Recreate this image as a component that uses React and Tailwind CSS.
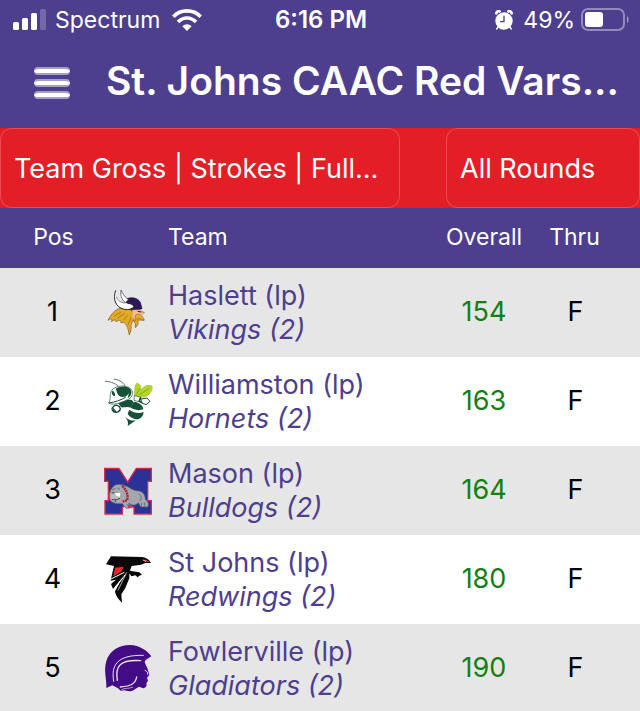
import React from "react";

function SignalIcon() {
  return (
    <svg className="h-[22px] w-[34px]" viewBox="0 0 34 22" fill="#fff" aria-hidden="true">
      <rect x="0" y="13" width="6" height="8" rx="1.5" />
      <rect x="9" y="9" width="6" height="12" rx="1.5" />
      <rect x="18" y="4" width="6" height="17" rx="1.5" />
      <rect x="27" y="0" width="6" height="21" rx="1.5" opacity="0.22" />
    </svg>
  );
}

function WifiIcon() {
  return (
    <svg className="h-[22px] w-[30px]" viewBox="0 0 90 66" aria-hidden="true">
      <g fill="none" stroke="#fff" strokeWidth="11">
        <path d="M4 23 C26 0 64 0 86 23" />
        <path d="M18 39 C34 23 56 23 72 39" />
      </g>
      <path d="M31 52 C39 44 51 44 59 52 L45 66 Z" fill="#fff" />
    </svg>
  );
}

function AlarmIcon() {
  return (
    <svg className="h-5 w-[18px]" viewBox="0 0 54 60" aria-hidden="true">
      <circle cx="27" cy="33" r="26" fill="#fff" />
      <g fill="none" stroke="#fff" strokeLinecap="round">
        <path d="M4 10 C5 5 9 3 14 4" strokeWidth="8" />
        <path d="M50 10 C49 5 45 3 40 4" strokeWidth="8" />
        <path d="M10 50 L5 57 M44 50 L49 57" strokeWidth="4" />
      </g>
      <path d="M27 17 V35 H15" fill="none" stroke="#4d3e8e" strokeWidth="4" />
    </svg>
  );
}

function BatteryIcon() {
  return (
    <svg className="h-6 w-12" viewBox="0 0 48 24" aria-hidden="true">
      <rect x="1" y="1" width="42" height="21" rx="6" fill="none" stroke="#fff" strokeOpacity="0.4" strokeWidth="2" />
      <rect x="4" y="4" width="18" height="15" rx="3" fill="#fff" />
      <path d="M46 8 C48 9 48 14 46 15 Z" fill="#fff" fillOpacity="0.5" />
    </svg>
  );
}

function VikingsLogo() {
  return (
    <>
      <path d="M86 82 C66 84 50 98 39 121 C48 115 54 116 49 125 C58 118 65 118 63 126 C72 118 78 120 78 129 C85 124 93 130 98 143 L103 165 C107 155 110 145 108 135 L114 119 L118 127 C124 131 119 137 121 143 C130 137 131 126 128 120 L147 121 L142 113 L138 107 L148 98 L128 88 Z" fill="#e2a926" stroke="#7d5a1a" strokeWidth="2" />
      <path d="M114 89 L137 88 L141 97 L148 101 L140 107 L127 106 L119 120 L112 110 Z" fill="#efb9a0" />
      <path d="M122 105 C132 99 142 105 148 120 C141 121 134 113 128 114 L119 124 Z" fill="#e9ae22" stroke="#7d5a1a" strokeWidth="1.5" />
      <path d="M57 109 L78 96 M67 114 L89 101 M85 121 L99 106 M99 134 L108 112" stroke="#8e661c" strokeWidth="2" />
      <path d="M86 62 C101 49 126 50 136 67 L141 86 C129 91 119 84 108 91 L100 72 Z" fill="#2c1958" stroke="#1b1230" strokeWidth="2" />
      <path d="M78 30 C76 47 80 59 91 68 L100 59 C87 49 83 40 78 30 Z" fill="#fff" stroke="#33303c" strokeWidth="2" />
      <path d="M62 31 C54 55 60 81 86 87 C100 90 112 86 116 80 C109 69 95 72 83 68 C68 63 63 52 62 31 Z" fill="#fff" />
      <path d="M62 31 C54 55 59 81 88 88 C101 90 111 88 117 80" fill="none" stroke="#222" strokeWidth="3" />
      <path d="M64 50 C69 63 77 68 91 69" fill="none" stroke="#55535c" strokeWidth="2" />
      <path d="M128 94 L139 96" stroke="#2b1a12" strokeWidth="3" />
    </>
  );
}

function HornetsLogo() {
  return (
    <>
      <path d="M118 82 C121 65 116 50 126 43 C137 45 138 54 137 64 C147 51 159 46 171 51 C174 62 165 80 146 84 Z" fill="#b7d527" stroke="#9dbe26" strokeWidth="2" />
      <path d="M124 76 L134 58 M132 78 L162 58" stroke="#5a9031" strokeWidth="2" />
      <g fill="none" stroke="#5c7568" strokeWidth="3">
        <path d="M30 37 C50 38 64 44 75 57" />
        <path d="M56 30 C76 33 87 42 92 56" />
      </g>
      <path d="M50 64 C64 47 95 48 108 60 C117 71 112 87 97 92 C77 104 52 109 40 102 C49 96 42 79 50 64 Z" fill="#fff" stroke="#174d38" strokeWidth="2" />
      <path d="M62 59 C78 49 100 51 107 62 C112 72 107 83 98 87 L102 72 C96 83 83 87 73 81 C66 76 66 67 62 59 Z" fill="#155039" />
      <path d="M52 65 C58 67 61 74 60 81 C53 81 48 74 52 65 Z" fill="#155039" />
      <path d="M42 102 C59 99 78 94 93 84" fill="none" stroke="#174d38" strokeWidth="3" />
      <path d="M70 103 C88 97 99 89 111 94 L122 106 L106 116 C98 111 82 118 78 114 Z" fill="#155039" />
      <path d="M55 113 C60 105 74 109 76 119 C75 130 60 134 54 126 C49 121 51 116 55 113 Z" fill="#fff" stroke="#174d38" strokeWidth="4" />
      <path d="M54 116 C50 124 57 131 66 130 L60 122 Z" fill="#174d38" />
      <path d="M118 80 L137 84 L131 98 L117 94 Z" fill="#fff" stroke="#174d38" strokeWidth="2" />
      <path d="M138 90 L156 87 L165 97 L153 107 L139 101 Z" fill="#fff" stroke="#174d38" strokeWidth="3" />
      <path d="M137 85 L133 97 L142 101" fill="none" stroke="#174d38" strokeWidth="5" />
      <path d="M117 99 C138 101 147 112 146 134 C137 146 124 153 98 170 C100 158 104 153 90 142 C100 136 102 126 106 116 Z" fill="#fff" />
      <path d="M118 98 C136 102 144 110 145 121 C131 126 116 123 106 115 Z M103 122 C116 132 132 134 146 129 C145 141 138 147 130 151 C114 151 102 142 98 134 Z M90 143 C100 152 113 157 123 154 L98 171 C101 160 98 153 90 143 Z" fill="#155039" />
    </>
  );
}

function BulldogsLogo() {
  return (
    <>
      <path d="M29 31 H72 L98 72 L124 31 H169 V70 H158 V128 H169 V168 H117 V148 L98 137 L82 148 V168 H30 V128 H40 V70 H29 Z" fill="#2b3196" stroke="#d82a49" strokeWidth="4" />
      <path d="M51 90 C57 79 71 76 84 81 C98 82 108 96 124 98 C141 98 151 108 151 124 C160 130 163 140 158 147 L137 147 L130 134 C120 145 109 142 101 135 L112 149 L93 151 L82 137 C68 139 56 136 46 129 C40 117 42 102 51 90 Z" fill="#a5a7ad" stroke="#55576a" strokeWidth="2" />
      <path d="M78 84 L86 79 L93 86 M52 95 L62 91 M67 89 L75 94 M130 107 C140 113 141 121 134 129" fill="none" stroke="#505260" strokeWidth="2" />
      <path d="M47 110 C56 102 66 104 75 112 L73 129 C63 134 52 129 47 122 Z" fill="#bcbcc0" />
      <path d="M61 106 L76 104 L75 116 L63 113 Z" fill="#fff" />
      <path d="M50 104 L58 105 M50 124 C58 126 66 127 75 121 M60 124 L63 132" fill="none" stroke="#45434c" strokeWidth="3" />
      <path d="M82 84 C95 96 101 113 96 127 L83 131" fill="none" stroke="#a52334" strokeWidth="7" strokeDasharray="6 2" />
      <path d="M140 134 L139 146 M149 133 L149 146 M101 139 L106 148" stroke="#555965" strokeWidth="2" />
      <path d="M96 138 L109 146 L100 151 Z" fill="#d82a49" />
    </>
  );
}

function FalconLogo() {
  return (
    <>
      <path d="M48 28 L141 30 C155 32 163 38 168 48 L151 48 L138 53 L110 57 L105 71 L133 76 L141 83 L133 86 L128 91 L121 85 L109 88 L103 79 L103 94 L91 123 L79 142 L81 168 C67 153 61 143 60 133 L83 91 L54 126 L48 111 L63 98 L47 101 L49 91 L57 57 L33 52 Z" fill="#090909" />
      <path d="M59 61 L89 57 L80 75 L52 91 Z" fill="#e12928" stroke="#090909" strokeWidth="3" />
      <path d="M48 96 L88 76 M57 127 L91 83" stroke="#fff" strokeWidth="3" />
      <path d="M69 130 L95 76" stroke="#fff" strokeWidth="2" />
      <path d="M143 38 L153 38 L165 46 L153 45 Z" fill="#d92835" />
      <path d="M143 39 L153 43" stroke="#fff" strokeWidth="2" />
    </>
  );
}

function GladiatorLogo() {
  return (
    <>
      <path d="M34 156 C36 134 25 104 34 75 C44 43 73 27 105 27 C134 28 157 44 169 61 L151 73 L149 79 L158 99 L163 117 L156 125 L159 134 L154 142 C157 151 151 156 145 157 L132 152 C121 158 115 166 102 166 L87 163 C73 168 74 157 66 155 L52 148 Z" fill="#440b87" />
      <g fill="none" stroke="#e6e6e6" strokeLinecap="round">
        <path d="M56 136 C48 90 63 56 145 58" strokeWidth="3" />
        <path d="M67 133 C60 91 74 70 137 74" strokeWidth="4" />
        <path d="M125 123 C121 146 105 150 76 153" strokeWidth="4" />
        <path d="M150 103 C155 106 160 108 158 115" strokeWidth="3" />
        <path d="M80 161 C90 155 99 159 113 154" strokeWidth="2" />
      </g>
    </>
  );
}

const teams = [
  { pos: 1, school: "Haslett (lp)", name: "Vikings (2)", overall: 154, Logo: VikingsLogo },
  { pos: 2, school: "Williamston (lp)", name: "Hornets (2)", overall: 163, Logo: HornetsLogo },
  { pos: 3, school: "Mason (lp)", name: "Bulldogs (2)", overall: 164, Logo: BulldogsLogo },
  { pos: 4, school: "St Johns (lp)", name: "Redwings (2)", overall: 180, Logo: FalconLogo },
  { pos: 5, school: "Fowlerville (lp)", name: "Gladiators (2)", overall: 190, Logo: GladiatorLogo },
];

export default function App() {
  return (
    <div className="h-screen overflow-hidden bg-white font-['Inter','Liberation_Sans',sans-serif]">
      <header className="bg-[#4d3e8e] text-white">
        <div className="grid h-10 grid-cols-[1fr_auto_1fr] items-center pr-[11px] pl-[13px] text-[23px] leading-10">
          <div className="flex items-center">
            <SignalIcon />
            <span className="pr-3 pl-2">Spectrum</span>
            <WifiIcon />
          </div>
          <span className="text-2xl font-semibold">6:16 PM</span>
          <div className="flex items-center justify-end">
            <AlarmIcon />
            <span className="pr-1.5 pl-2.5">49%</span>
            <BatteryIcon />
          </div>
        </div>
        <div className="flex h-[88px] items-center gap-9 pr-4 pb-0.5 pl-[34px]">
          <button type="button" aria-label="Menu" className="flex w-9 shrink-0 flex-col gap-1">
            <span className="h-2 w-full rounded-sm border-y-2 border-white/50 bg-white bg-clip-padding" />
            <span className="h-2 w-full rounded-sm border-y-2 border-white/50 bg-white bg-clip-padding" />
            <span className="h-2 w-full rounded-sm border-y-2 border-white/50 bg-white bg-clip-padding" />
          </button>
          <h1 className="pb-1 text-[39px] font-semibold whitespace-nowrap">St. Johns CAAC Red Vars...</h1>
        </div>
      </header>

      <div className="flex h-20 justify-between bg-[#e31e27] text-[27px] text-white">
        <select
          aria-label="Leaderboard"
          className="w-[400px] appearance-none rounded-xl border border-white/20 bg-[#e31e27] px-[13px] pt-0.5"
        >
          <option>Team Gross | Strokes | Full...</option>
        </select>
        <select
          aria-label="Rounds"
          className="w-[194px] appearance-none rounded-xl border border-white/20 bg-[#e31e27] px-[13px] pt-0.5"
        >
          <option>All Rounds</option>
        </select>
      </div>

      <table className="w-full table-fixed border-collapse">
        <colgroup>
          <col className="w-[95px]" />
          <col className="w-[70px]" />
          <col />
          <col className="w-[98px]" />
          <col className="w-[107px]" />
        </colgroup>
        <thead className="bg-[#4d3e8e] text-[23px] text-white">
          <tr className="h-[60px]">
            <th className="pb-0.5 pl-3 font-normal">Pos</th>
            <td />
            <th className="pb-0.5 pl-[3px] text-left font-normal">Team</th>
            <th className="pb-0.5 font-normal">Overall</th>
            <th className="pr-6 pb-0.5 font-normal">Thru</th>
          </tr>
        </thead>
        <tbody className="text-[27px] text-black">
          {teams.map(({ pos, school, name, overall, Logo }) => (
            <tr key={pos} className="h-[89px] odd:bg-[#e6e6e6] even:bg-white">
              <td className="pl-2.5 text-center">{pos}</td>
              <td>
                <svg className="h-[65px] w-[70px]" viewBox="0 0 210 195" role="img" aria-label={name}>
                  <Logo />
                </svg>
              </td>
              <td className="pl-[3px] leading-[34px] whitespace-nowrap">
                <a href="#team" className="text-[#4d3e8e]">
                  {school}
                  <br />
                  <em>{name}</em>
                </a>
              </td>
              <td className="text-center text-[#118011]">{overall}</td>
              <td className="pr-[22px] text-center">F</td>
            </tr>
          ))}
        </tbody>
      </table>
    </div>
  );
}
